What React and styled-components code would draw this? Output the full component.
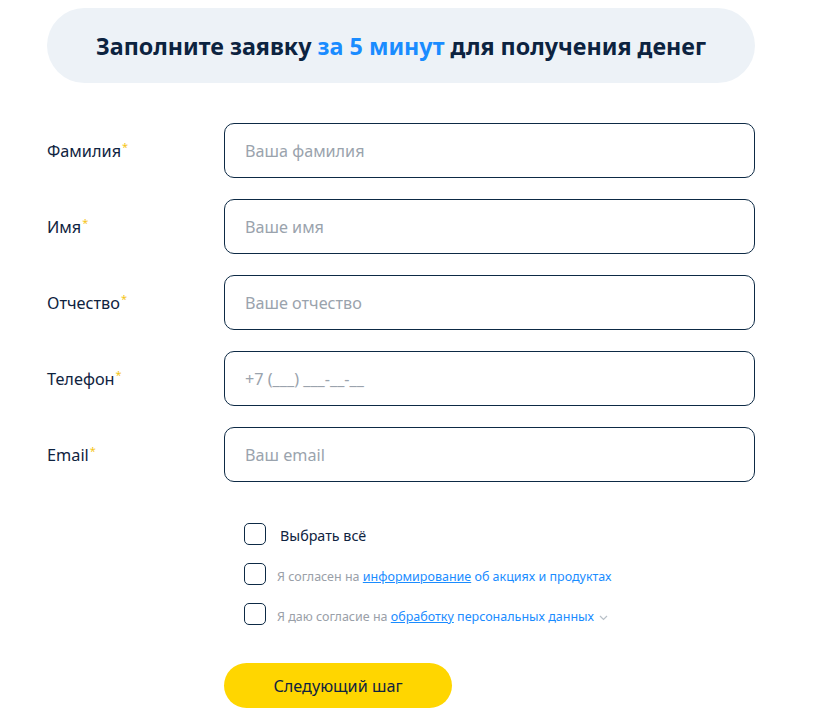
import React from "react";
import styled, { createGlobalStyle } from "styled-components";

const Global = createGlobalStyle`
  html, body { margin: 0; padding: 0; background: #fff; }
  body { font-family: "Noto Sans", "Open Sans", sans-serif; color: #0d2440; }
  * { box-sizing: border-box; }
`;

const Page = styled.div`
  width: 708px;
  margin-left: 47px;
  padding-top: 8px;
`;

const Banner = styled.div`
  height: 75px;
  border-radius: 38px;
  background: #edf2f7;
  display: flex;
  align-items: center;
  justify-content: center;
`;

const Title = styled.h1`
  margin: 0;
  font-size: 23.3px;
  font-weight: 700;
  color: #0c2340;
  letter-spacing: 0;
`;

const Accent = styled.span`
  color: #1a8cff;
`;

const Form = styled.div`
  margin-top: 40px;
  display: flex;
  flex-direction: column;
  gap: 21px;
`;

const Row = styled.div`
  display: grid;
  grid-template-columns: 177px 531px;
  align-items: center;
`;

const Label = styled.label`
  font-size: 16.3px;
  color: #0f2340;
`;

const Star = styled.span`
  color: #f5c518;
  font-size: 11px;
  vertical-align: top;
  position: relative;
  top: -1px;
  margin-left: 1px;
`;

const Input = styled.input`
  height: 55px;
  width: 100%;
  border: 1px solid #0d2a45;
  border-radius: 10px;
  padding: 0 20px;
  font-family: inherit;
  font-size: 16.2px;
  color: #0f2340;
  outline: none;
  &::placeholder { color: #9aa3ad; }
`;

const Checks = styled.div`
  margin-top: 41px;
  margin-left: 197px;
  display: flex;
  flex-direction: column;
  gap: 18px;
`;

const CheckRow = styled.div`
  display: flex;
  align-items: center;
  gap: ${p => (p.$small ? "11px" : "14px")};
`;

const Box = styled.span`
  width: 22px;
  height: 22px;
  flex: none;
  border: 1.5px solid #0d2a45;
  border-radius: 5px;
`;

const CheckText = styled.span`
  font-size: ${p => (p.$small ? "12.5px" : "14.3px")};
  color: ${p => (p.$small ? "#9aa0a8" : "#0f2340")};
  padding-top: ${p => (p.$small ? "5px" : "2px")};
`;

const Link = styled.a`
  color: #1a8cff;
  text-decoration: underline;
`;

const Blue = styled.span`
  color: #1a8cff;
`;

const Chevron = styled.svg`
  width: 9px;
  height: 6px;
  margin-left: 5px;
  vertical-align: middle;
`;

const Button = styled.button`
  margin-top: 38px;
  margin-left: 177px;
  width: 228px;
  height: 45px;
  border: none;
  border-radius: 23px;
  background: #ffd600;
  font-family: inherit;
  font-size: 16.2px;
  color: #0f2340;
`;

const fields = [
  ["Фамилия", "Ваша фамилия"],
  ["Имя", "Ваше имя"],
  ["Отчество", "Ваше отчество"],
  ["Телефон", "+7 (___) ___-__-__"],
  ["Email", "Ваш email"],
];

export default function App() {
  return (
    <>
      <Global />
      <Page>
        <Banner>
          <Title>
            Заполните заявку <Accent>за 5 минут</Accent> для получения денег
          </Title>
        </Banner>
        <Form>
          {fields.map(([l, p]) => (
            <Row key={l}>
              <Label>
                {l}
                <Star>*</Star>
              </Label>
              <Input placeholder={p} />
            </Row>
          ))}
        </Form>
        <Checks>
          <CheckRow>
            <Box />
            <CheckText>Выбрать всё</CheckText>
          </CheckRow>
          <CheckRow $small>
            <Box />
            <CheckText $small>
              Я согласен на <Link>информирование</Link> <Blue>об акциях и продуктах</Blue>
            </CheckText>
          </CheckRow>
          <CheckRow $small>
            <Box />
            <CheckText $small>
              Я даю согласие на <Link>обработку</Link> <Blue>персональных данных</Blue>
              <Chevron viewBox="0 0 9 6">
                <path d="M1 1l3.5 3.5L8 1" fill="none" stroke="#b8c0c8" strokeWidth="1.2" />
              </Chevron>
            </CheckText>
          </CheckRow>
        </Checks>
        <Button>Следующий шаг</Button>
      </Page>
    </>
  );
}
